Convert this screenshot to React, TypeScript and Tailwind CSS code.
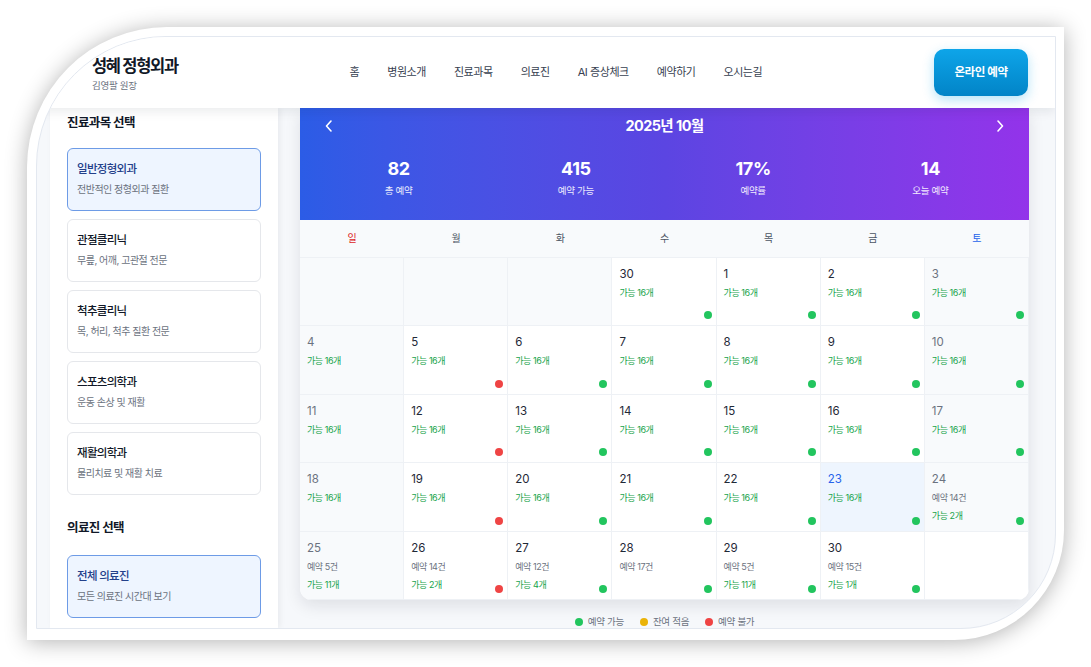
import React from "react";

type Cell = {
    d?: number;
    kind: "empty" | "emptyWhite" | "wk" | "sun" | "sat" | "today";
    booked?: number;
    avail?: number;
    dot?: "g" | "r";
};

const rows: Cell[][] = [
    [
        { kind: "empty" },
        { kind: "empty" },
        { kind: "empty" },
        { d: 30, kind: "wk", avail: 16, dot: "g" },
        { d: 1, kind: "wk", avail: 16, dot: "g" },
        { d: 2, kind: "wk", avail: 16, dot: "g" },
        { d: 3, kind: "sat", avail: 16, dot: "g" },
    ],
    [
        { d: 4, kind: "sun", avail: 16 },
        { d: 5, kind: "wk", avail: 16, dot: "r" },
        { d: 6, kind: "wk", avail: 16, dot: "g" },
        { d: 7, kind: "wk", avail: 16, dot: "g" },
        { d: 8, kind: "wk", avail: 16, dot: "g" },
        { d: 9, kind: "wk", avail: 16, dot: "g" },
        { d: 10, kind: "sat", avail: 16, dot: "g" },
    ],
    [
        { d: 11, kind: "sun", avail: 16 },
        { d: 12, kind: "wk", avail: 16, dot: "r" },
        { d: 13, kind: "wk", avail: 16, dot: "g" },
        { d: 14, kind: "wk", avail: 16, dot: "g" },
        { d: 15, kind: "wk", avail: 16, dot: "g" },
        { d: 16, kind: "wk", avail: 16, dot: "g" },
        { d: 17, kind: "sat", avail: 16, dot: "g" },
    ],
    [
        { d: 18, kind: "sun", avail: 16 },
        { d: 19, kind: "wk", avail: 16, dot: "r" },
        { d: 20, kind: "wk", avail: 16, dot: "g" },
        { d: 21, kind: "wk", avail: 16, dot: "g" },
        { d: 22, kind: "wk", avail: 16, dot: "g" },
        { d: 23, kind: "today", avail: 16, dot: "g" },
        { d: 24, kind: "sat", booked: 14, avail: 2, dot: "g" },
    ],
    [
        { d: 25, kind: "sun", booked: 5, avail: 11 },
        { d: 26, kind: "wk", booked: 14, avail: 2, dot: "r" },
        { d: 27, kind: "wk", booked: 12, avail: 4, dot: "g" },
        { d: 28, kind: "wk", booked: 17, dot: "g" },
        { d: 29, kind: "wk", booked: 5, avail: 11, dot: "g" },
        { d: 30, kind: "wk", booked: 15, avail: 1, dot: "g" },
        { kind: "emptyWhite" },
    ],
];

const departments = [
    { title: "일반정형외과", desc: "전반적인 정형외과 질환", active: true },
    { title: "관절클리닉", desc: "무릎, 어깨, 고관절 전문" },
    { title: "척추클리닉", desc: "목, 허리, 척추 질환 전문" },
    { title: "스포츠의학과", desc: "운동 손상 및 재활" },
    { title: "재활의학과", desc: "물리치료 및 재활 치료" },
];

const navItems = ["홈", "병원소개", "진료과목", "의료진", "AI 증상체크", "예약하기", "오시는길"];

const stats = [
    { value: "82", label: "총 예약" },
    { value: "415", label: "예약 가능" },
    { value: "17%", label: "예약률" },
    { value: "14", label: "오늘 예약" },
];

function SelectCard({ title, desc, active }: { title: string; desc: string; active?: boolean }) {
    return (
        <div
            className={
                active
                    ? "h-[63px] rounded-[6px] border border-[#6d9be6] bg-[#eef5ff] px-[9px] pt-[11px]"
                    : "h-[63px] rounded-[6px] border border-[#e5e7eb] bg-white px-[9px] pt-[11px]"
            }
        >
            <div className={active ? "text-[11.5px] font-medium leading-[18px] tracking-[-0.06em] text-[#23408a]" : "text-[11.5px] font-medium leading-[18px] tracking-[-0.06em] text-[#111827]"}>
                {title}
            </div>
            <div className="mt-[4px] text-[10px] leading-[14px] tracking-[-0.05em] text-[#6b7280]">{desc}</div>
        </div>
    );
}

function DayCell({ c }: { c: Cell }) {
    const bg =
        c.kind === "wk" || c.kind === "emptyWhite"
            ? "bg-white"
            : c.kind === "today"
              ? "bg-[#eef5fe]"
              : "bg-[#f8fafc]";
    const numColor =
        c.kind === "today" ? "text-[#2563eb]" : c.kind === "sun" || c.kind === "sat" ? "text-[#6b7280]" : "text-[#1f2937]";
    return (
        <div className={`relative h-[68.4px] border-r border-b border-[#eef1f5] px-[7px] pt-[8px] ${bg}`}>
            {c.d !== undefined && (
                <div className="flex flex-col gap-[4px]">
                    <div className={`text-[11.5px] leading-[16px] ${numColor}`}>{c.d}</div>
                    {c.booked !== undefined && (
                        <div className="text-[9px] leading-[14px] tracking-[-0.05em] text-[#6b7280]">예약 {c.booked}건</div>
                    )}
                    {c.avail !== undefined && (
                        <div className="text-[9px] leading-[14px] tracking-[-0.05em] text-[#16a34a]">가능 {c.avail}개</div>
                    )}
                </div>
            )}
            {c.dot && (
                <span
                    className={
                        c.dot === "g"
                            ? "absolute right-[4px] bottom-[6px] h-[8px] w-[8px] rounded-full bg-[#22c55e]"
                            : "absolute right-[4px] bottom-[6px] h-[8px] w-[8px] rounded-full bg-[#ef4444]"
                    }
                />
            )}
        </div>
    );
}

export default function App() {
    return (
        <div
            className="h-[667px] w-[1091px] overflow-hidden bg-white pt-[27px] pl-[27px]"
            style={{ fontFamily: 'Inter, "Noto Sans CJK KR", sans-serif' }}
        >
            <div className="h-[613px] w-[1037px] rounded-tl-[140px] rounded-br-[110px] bg-white pt-[9px] pr-[8px] pb-[11px] pl-[9px] shadow-[0_2px_22px_rgba(0,0,0,0.3)]">
                <div className="flex h-full w-full flex-col overflow-hidden rounded-tl-[130px] rounded-br-[95px] border border-[#e3e8f0] bg-[#f6f8fb]">
                    {/* header */}
                    <header className="relative z-10 flex h-[71px] shrink-0 items-center justify-between bg-white pr-[27px] pl-[55px] shadow-[0_4px_10px_rgba(15,23,42,0.08)]">
                        <div className="pt-[2px]">
                            <div className="text-[16.5px] leading-[22px] font-bold tracking-[-0.08em] text-[#111827]">성혜 정형외과</div>
                            <div className="mt-[2px] text-[9.5px] leading-[14px] tracking-[-0.03em] text-[#6b7280]">김영팔 원장</div>
                        </div>
                        <nav className="flex items-center gap-[28px]">
                            {navItems.map((n) => (
                                <span key={n} className="text-[11px] tracking-[-0.04em] text-[#374151]">
                                    {n}
                                </span>
                            ))}
                        </nav>
                        <button className="h-[47px] w-[94px] rounded-[10px] bg-gradient-to-b from-[#0ea5e9] to-[#0284c7] text-[11.5px] font-semibold tracking-[-0.04em] text-white shadow-[0_4px_12px_rgba(14,165,233,0.3)]">
                            온라인 예약
                        </button>
                    </header>

                    {/* body */}
                    <div className="flex min-h-0 flex-1 pl-[13px]">
                        <aside className="w-[228px] shrink-0 bg-white px-[17px] pt-[5px] shadow-[2px_0_6px_rgba(15,23,42,0.06)]">
                            <h3 className="text-[12.5px] leading-[20px] font-semibold tracking-[-0.05em] text-[#111827]">진료과목 선택</h3>
                            <div className="mt-[15px] flex flex-col gap-[8px]">
                                {departments.map((d) => (
                                    <SelectCard key={d.title} title={d.title} desc={d.desc} active={d.active} />
                                ))}
                            </div>
                            <h3 className="mt-[23px] text-[12.5px] leading-[20px] font-semibold tracking-[-0.05em] text-[#111827]">의료진 선택</h3>
                            <div className="mt-[17px]">
                                <SelectCard title="전체 의료진" desc="모든 의료진 시간대 보기" active />
                            </div>
                        </aside>

                        <main className="ml-[22px] w-[729px] shrink-0">
                            <div className="overflow-hidden rounded-b-[12px] bg-white shadow-[0_6px_16px_rgba(15,23,42,0.1)]">
                                <div className="bg-gradient-to-r from-[#2b5ce6] via-[#5b45e2] to-[#9333ea] px-[24px] pt-[8px] pb-[22px] text-white">
                                    <div className="flex h-[20px] items-center justify-between">
                                        <svg width="10" height="14" viewBox="0 0 10 14" fill="none">
                                            <path d="M7 2L2.5 7L7 12" stroke="white" strokeWidth="1.6" strokeLinecap="round" strokeLinejoin="round" />
                                        </svg>
                                        <div className="text-[14.5px] leading-[20px] font-bold tracking-[-0.04em]">2025년 10월</div>
                                        <svg width="10" height="14" viewBox="0 0 10 14" fill="none">
                                            <path d="M3 2L7.5 7L3 12" stroke="white" strokeWidth="1.6" strokeLinecap="round" strokeLinejoin="round" />
                                        </svg>
                                    </div>
                                    <div className="-mx-[14px] mt-[21px] grid grid-cols-4">
                                        {stats.map((s) => (
                                            <div key={s.label} className="flex flex-col items-center">
                                                <div className="text-[18px] leading-[24px] font-bold tracking-[-0.02em]">{s.value}</div>
                                                <div className="mt-[3px] text-[9.5px] leading-[14px] tracking-[-0.03em] text-white/90">{s.label}</div>
                                            </div>
                                        ))}
                                    </div>
                                </div>
                                <div className="grid h-[38px] grid-cols-7 items-center border-b border-[#eef1f5] bg-[#f8fafc] text-center text-[10px] text-[#4b5563]">
                                    <span className="text-[#dc2626]">일</span>
                                    <span>월</span>
                                    <span>화</span>
                                    <span>수</span>
                                    <span>목</span>
                                    <span>금</span>
                                    <span className="text-[#2563eb]">토</span>
                                </div>
                                <div className="grid grid-cols-7">
                                    {rows.flat().map((c, i) => (
                                        <DayCell key={i} c={c} />
                                    ))}
                                </div>
                            </div>
                            <div className="mt-[15px] flex items-center justify-center gap-[16px] text-[9.5px] tracking-[-0.03em] text-[#6b7280]">
                                <div className="flex items-center gap-[5px]">
                                    <span className="h-[8px] w-[8px] rounded-full bg-[#22c55e]" />
                                    예약 가능
                                </div>
                                <div className="flex items-center gap-[5px]">
                                    <span className="h-[8px] w-[8px] rounded-full bg-[#eab308]" />
                                    잔여 적음
                                </div>
                                <div className="flex items-center gap-[5px]">
                                    <span className="h-[8px] w-[8px] rounded-full bg-[#ef4444]" />
                                    예약 불가
                                </div>
                            </div>
                        </main>
                    </div>
                </div>
            </div>
        </div>
    );
}
